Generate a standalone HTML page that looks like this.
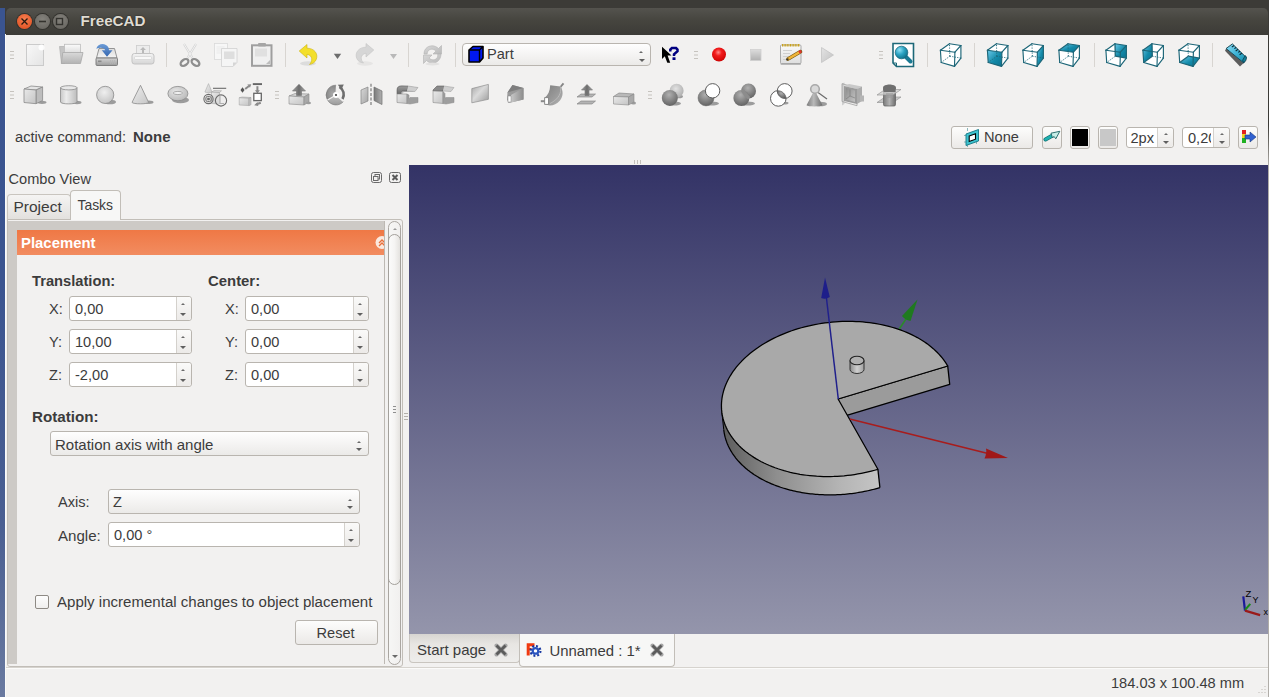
<!DOCTYPE html>
<html><head><meta charset="utf-8">
<style>
*{margin:0;padding:0;box-sizing:border-box}
html,body{width:1269px;height:697px;overflow:hidden;background:#3c3b37;font-family:"Liberation Sans",sans-serif;color:#3c3c3c}
div,svg{position:absolute}
.t{white-space:nowrap;line-height:1}
.wb{top:14px;width:15px;height:15px;border-radius:50%;box-shadow:0 0 0 1px #33322e}
.spin{background:#fff;border:1px solid #b9b5af;border-radius:3px}
.dv{top:0;bottom:0;width:1px;background:#d4d1cc}
.sb{top:0;bottom:0;right:0;background:linear-gradient(#fafaf9,#eceae8);border-radius:0 3px 3px 0}
.combo{border:1px solid #b9b5af;border-radius:3px;background:linear-gradient(#fefefe,#f3f2f1 60%,#ebeae8)}
.btn{border:1px solid #b9b5af;border-radius:3px;background:linear-gradient(#fdfdfc,#ebe9e7)}
.lbl{font-size:14.6px;color:#3c3c3c}
.up,.dn{width:0;height:0;border-left:3px solid transparent;border-right:3px solid transparent}
.up{border-bottom:2.5px solid #6a6a6a;border-left-width:2.5px;border-right-width:2.5px;margin-left:.5px;margin-top:.5px}
.dn{border-top:3px solid #5f5f5f}
</style></head><body>
<div style="left:0;top:8px;width:5px;height:689px;background:linear-gradient(#3a5490,#3b5490 40%,#4a5f92 75%,#6a7aa0)"></div>
<div style="left:5px;top:34px;width:1263px;height:663px;background:#f2f1f0;border-left:1px solid #fafaf9;border-top:1px solid #fbfbfa"></div>
<div style="left:6px;top:8px;width:1262px;height:27px;border-radius:5px 5px 0 0;background:linear-gradient(#54534e,#46453f 45%,#3c3b37)"></div>
<div class="wb" style="left:17px;background:radial-gradient(circle at 50% 35%,#f47e50,#df4a1b)"></div>
<div class="wb" style="left:35px;background:radial-gradient(circle at 50% 35%,#84827c,#62605b)"></div>
<div class="wb" style="left:53px;background:radial-gradient(circle at 50% 35%,#84827c,#62605b)"></div>
<svg style="left:17px;top:14px" width="51" height="15">
 <path d="M4.5 4.5l6 6M10.5 4.5l-6 6" stroke="#2a1a10" stroke-width="1.3"/>
 <path d="M22 7.5h7" stroke="#33322e" stroke-width="1.6"/>
 <rect x="39.5" y="4.5" width="6" height="6" fill="none" stroke="#33322e" stroke-width="1.4"/>
</svg>
<div class="t" style="left:80.5px;top:13px;font-size:15.2px;font-weight:bold;color:#dfdbd2;text-shadow:0 0 1.5px #1a1916">FreeCAD</div>

<!-- workbench combo -->
<div class="combo" style="left:462px;top:43px;width:189px;height:23px;border-radius:4px"></div>
<svg style="left:467px;top:45px" width="19" height="19"><path d="M2,5L6,1.5H16V13L12.5,17H2Z" fill="#0018f0" stroke="#000" stroke-width="1.6" stroke-linejoin="round"/><path d="M2,5H12.5V17M12.5,5L16,1.5" stroke="#000" stroke-width="1.4" fill="none"/></svg>
<div class="t lbl" style="left:487px;top:47px;font-size:14.6px">Part</div>
<div class="up" style="left:638.5px;top:50px"></div><div class="dn" style="left:638.5px;top:59px"></div>

<svg style="left:0;top:0" width="1269" height="120"><defs>
<linearGradient id="gPage" x1="0" y1="0" x2="1" y2="1"><stop offset="0" stop-color="#f8f8f8"/><stop offset="1" stop-color="#e4e4e4"/></linearGradient>
<linearGradient id="gFold" x1="0" y1="0" x2="0" y2="1"><stop offset="0" stop-color="#d9d9d9"/><stop offset="1" stop-color="#b3b3b3"/></linearGradient><linearGradient id="gPaper" x1="0" y1="0" x2="0" y2="1"><stop offset="0" stop-color="#fbfbfb"/><stop offset="1" stop-color="#d9d9d9"/></linearGradient><linearGradient id="gTray" x1="0" y1="0" x2="0" y2="1"><stop offset="0" stop-color="#dcdcdc"/><stop offset="1" stop-color="#f4f4f4"/></linearGradient>
<linearGradient id="gDrive" x1="0" y1="0" x2="0" y2="1"><stop offset="0" stop-color="#d2d2d2"/><stop offset="1" stop-color="#9c9c9c"/></linearGradient>
<linearGradient id="gBlue" x1="0" y1="0" x2="0" y2="1"><stop offset="0" stop-color="#6b9bd6"/><stop offset="1" stop-color="#3466b0"/></linearGradient>
<linearGradient id="gPrint" x1="0" y1="0" x2="0" y2="1"><stop offset="0" stop-color="#f4f4f4"/><stop offset="1" stop-color="#d6d6d6"/></linearGradient>
<linearGradient id="gRef" x1="0" y1="0" x2="1" y2="1"><stop offset="0" stop-color="#d9d9d9"/><stop offset="1" stop-color="#b9b9b9"/></linearGradient>
<radialGradient id="gRed" cx=".45" cy=".35" r=".7"><stop offset="0" stop-color="#ff8a8a"/><stop offset=".35" stop-color="#f21c1c"/><stop offset="1" stop-color="#c80000"/></radialGradient>
<linearGradient id="gStop" x1="0" y1="0" x2="0" y2="1"><stop offset="0" stop-color="#dcdcdc"/><stop offset="1" stop-color="#b0b0b0"/></linearGradient>
<linearGradient id="gNote" x1="0" y1="0" x2="0" y2="1"><stop offset="0" stop-color="#fafafa"/><stop offset="1" stop-color="#dedede"/></linearGradient>
<linearGradient id="gPlay" x1="0" y1="0" x2="1" y2="1"><stop offset="0" stop-color="#e4e4e4"/><stop offset="1" stop-color="#c2c2c2"/></linearGradient>
<linearGradient id="gTeal" x1="0" y1="0" x2="1" y2="1"><stop offset="0" stop-color="#6ccbeb"/><stop offset=".55" stop-color="#138aa9"/><stop offset="1" stop-color="#0b7290"/></linearGradient>
<radialGradient id="gTealR" cx=".35" cy=".3" r=".75"><stop offset="0" stop-color="#8fe0f5"/><stop offset=".5" stop-color="#2aa3c2"/><stop offset="1" stop-color="#0f6f88"/></radialGradient>
<linearGradient id="gRuler" x1="0" y1="0" x2="1" y2="1"><stop offset="0" stop-color="#8ee0f7"/><stop offset=".5" stop-color="#3fb3d6"/><stop offset="1" stop-color="#128aa8"/></linearGradient>
<linearGradient id="gBox" x1="0" y1="0" x2="1" y2="1"><stop offset="0" stop-color="#e9e9e9"/><stop offset="1" stop-color="#c4c4c4"/></linearGradient>
<linearGradient id="gCyl" x1="0" y1="0" x2="1" y2="0"><stop offset="0" stop-color="#c8c8c8"/><stop offset=".35" stop-color="#ececec"/><stop offset="1" stop-color="#bcbcbc"/></linearGradient>
<radialGradient id="gSph" cx=".45" cy=".35" r=".7"><stop offset="0" stop-color="#efefef"/><stop offset="1" stop-color="#c2c2c2"/></radialGradient>
<linearGradient id="gCone" x1="0" y1="0" x2="1" y2="1"><stop offset="0" stop-color="#efefef"/><stop offset="1" stop-color="#c6c6c6"/></linearGradient>
<radialGradient id="gTor" cx=".4" cy=".35" r=".75"><stop offset="0" stop-color="#e6e6e6"/><stop offset="1" stop-color="#b5b5b5"/></radialGradient>
<linearGradient id="gArrow" x1="0" y1="0" x2="1" y2="0"><stop offset="0" stop-color="#a0a0a0"/><stop offset=".5" stop-color="#6c6c6c"/><stop offset="1" stop-color="#a8a8a8"/></linearGradient>
<radialGradient id="gRev" cx=".4" cy=".35" r=".75"><stop offset="0" stop-color="#cfcfcf"/><stop offset="1" stop-color="#8e8e8e"/></radialGradient>
<radialGradient id="gRevA" cx=".6" cy=".6" r=".8"><stop offset="0" stop-color="#a8a8a8"/><stop offset="1" stop-color="#7d7d7d"/></radialGradient><linearGradient id="gRevB" x1="0" y1="0" x2="0" y2="1"><stop offset="0" stop-color="#c4c4c4"/><stop offset="1" stop-color="#9a9a9a"/></linearGradient><linearGradient id="gMirL" x1="0" y1="0" x2="1" y2="1"><stop offset="0" stop-color="#d8d8d8"/><stop offset="1" stop-color="#a5a5a5"/></linearGradient>
<linearGradient id="gMirR" x1="0" y1="0" x2="1" y2="0"><stop offset="0" stop-color="#7a7a7a"/><stop offset="1" stop-color="#b0b0b0"/></linearGradient>
<linearGradient id="gFil" x1="0" y1="0" x2="0" y2="1"><stop offset="0" stop-color="#9b9b9b"/><stop offset="1" stop-color="#6a6a6a"/></linearGradient>
<linearGradient id="gRuled" x1="0" y1="0" x2="1" y2="1"><stop offset="0" stop-color="#a6a6a6"/><stop offset=".45" stop-color="#dadada"/><stop offset="1" stop-color="#9a9a9a"/></linearGradient>
<linearGradient id="gLoft" x1="0" y1="0" x2="1" y2="0"><stop offset="0" stop-color="#c8c8c8"/><stop offset="1" stop-color="#8c8c8c"/></linearGradient>
<linearGradient id="gSwp" x1="0" y1="0" x2="1" y2="1"><stop offset="0" stop-color="#7e7e7e"/><stop offset=".6" stop-color="#9c9c9c"/><stop offset="1" stop-color="#b8b8b8"/></linearGradient>
<radialGradient id="gSphL" cx=".45" cy=".35" r=".7"><stop offset="0" stop-color="#e2e2e2"/><stop offset="1" stop-color="#a9a9a9"/></radialGradient>
<radialGradient id="gSphD" cx=".45" cy=".3" r=".75"><stop offset="0" stop-color="#b0b0b0"/><stop offset="1" stop-color="#5e5e5e"/></radialGradient>
<linearGradient id="gCone2" x1="0" y1="0" x2="1" y2="0"><stop offset="0" stop-color="#7a7a7a"/><stop offset=".45" stop-color="#b9b9b9"/><stop offset="1" stop-color="#6c6c6c"/></linearGradient>
<linearGradient id="gOff" x1="0" y1="0" x2="1" y2="1"><stop offset="0" stop-color="#8e8e8e"/><stop offset="1" stop-color="#c3c3c3"/></linearGradient>
<linearGradient id="gComp" x1="0" y1="0" x2="1" y2="0"><stop offset="0" stop-color="#7b7b7b"/><stop offset=".5" stop-color="#b2b2b2"/><stop offset="1" stop-color="#6e6e6e"/></linearGradient>
<linearGradient id="gPartCube" x1="0" y1="0" x2="1" y2="1"><stop offset="0" stop-color="#2a4cff"/><stop offset="1" stop-color="#0010e0"/></linearGradient>
</defs><path d="M10,51.5h4M10,55h4M10,58.5h4" stroke="#c6c3be" stroke-width="1"/><path d="M10,91.5h4M10,95h4M10,98.5h4" stroke="#c6c3be" stroke-width="1"/><path d="M275,91.5h4M275,95h4M275,98.5h4" stroke="#c6c3be" stroke-width="1"/><path d="M648,91.5h4M648,95h4M648,98.5h4" stroke="#c6c3be" stroke-width="1"/><path d="M694,51.5h4M694,55h4M694,58.5h4" stroke="#c6c3be" stroke-width="1"/><path d="M879,51.5h4M879,55h4M879,58.5h4" stroke="#c6c3be" stroke-width="1"/><path d="M166.5,43v24" stroke="#d8d5d1" stroke-width="1"/><path d="M285.5,43v24" stroke="#d8d5d1" stroke-width="1"/><path d="M408.5,43v24" stroke="#d8d5d1" stroke-width="1"/><path d="M455.5,43v24" stroke="#d8d5d1" stroke-width="1"/><path d="M927.5,43v24" stroke="#d8d5d1" stroke-width="1"/><path d="M974.5,43v24" stroke="#d8d5d1" stroke-width="1"/><path d="M1094.5,43v24" stroke="#d8d5d1" stroke-width="1"/><path d="M1212.5,43v24" stroke="#d8d5d1" stroke-width="1"/><g transform="translate(23,43)"><rect x="3.5" y="1.5" width="17" height="21" fill="url(#gPage)" stroke="#cbcbcb"/><circle cx="18.5" cy="4.5" r="3" fill="#fff" opacity=".9"/></g><g transform="translate(59,43)"><path d="M0.5,3.5H5.5V20.5H2.5Z" fill="#c4c4c4" stroke="#b0b0b0" stroke-width=".7"/><rect x="5.5" y="1.3" width="16" height="10" fill="url(#gPaper)" stroke="#bdbdbd" stroke-width=".8"/><path d="M3.8,9.5H24L21.5,20.5H2.3Z" fill="url(#gFold)" stroke="#a8a8a8" stroke-width=".8"/></g><g transform="translate(95,43)"><path d="M4,5.5H19.5L22,15H1.5Z" fill="url(#gTray)" stroke="#8a8a8a" stroke-width=".9"/><rect x="1" y="15" width="21.5" height="7.5" rx="1" fill="url(#gDrive)" stroke="#777" stroke-width=".9"/><rect x="3" y="17.5" width="3.5" height="1.6" fill="#8a8a8a"/><path d="M15.5,17v4M17.5,17v4M19.5,17v4" stroke="#b4b4b4" stroke-width=".8"/><path d="M1.3,5.8C2.5,0.5 10.5,-1 13.6,4.8L14,7.2H17.5L12,13.8L6.8,7.2H10.3C9.3,4.5 5,3.8 1.3,5.8Z" fill="url(#gBlue)"/></g><g transform="translate(131,43)"><rect x="5.5" y="2.5" width="13" height="10" fill="#ececec" stroke="#cdcdcd" stroke-width=".8"/><path d="M12,4l3,3h-2v3h-2v-3h-2z" fill="#b9b9b9"/><rect x="1" y="10.5" width="22" height="10.5" rx="2.5" fill="url(#gPrint)" stroke="#c3c3c3"/><rect x="3.5" y="13.5" width="17" height="3" rx="1" fill="#f8f8f8" stroke="#cfcfcf" stroke-width=".6"/></g><g transform="translate(178,43)"><path d="M6,1l8.5,14M18,1l-8.5,14" stroke="#d2d2d2" stroke-width="2.2"/><path d="M6,1l8.5,14M18,1l-8.5,14" stroke="#f6f6f6" stroke-width=".9"/><ellipse cx="6.5" cy="19.5" rx="4.3" ry="2.8" transform="rotate(-35 6.5 19.5)" fill="none" stroke="#8e8e8e" stroke-width="2.3"/><ellipse cx="17.5" cy="19.5" rx="4.3" ry="2.8" transform="rotate(35 17.5 19.5)" fill="none" stroke="#8e8e8e" stroke-width="2.3"/></g><g transform="translate(214,43)"><rect x="0.5" y="0.5" width="13" height="16" fill="#f7f7f7" stroke="#dadada" stroke-width=".8"/><path d="M2.5,4h8M2.5,6h8M2.5,8h8M2.5,10h8" stroke="#e2e2e2" stroke-width=".6"/><path d="M7.5,5.5h15.5v14l-4,4h-11.5z" fill="#f5f5f5" stroke="#d0d0d0" stroke-width=".8"/><rect x="10" y="8.5" width="10.5" height="7.5" fill="#dedede"/><path d="M19,23.5l4,-4h-4z" fill="#d5d5d5"/></g><g transform="translate(250,43)"><rect x="2" y="2.3" width="19.5" height="20.5" fill="#f0f0f0" stroke="#9f9f9f" stroke-width="2"/><rect x="8" y="0" width="8" height="3.5" rx="1" fill="#a5a5a5"/><rect x="5" y="5.5" width="12" height="8" fill="#e0e0e0"/><path d="M16,21l4,-4v4z" fill="#bdbdbd"/></g><g transform="translate(296,43)"><ellipse cx="12" cy="20.5" rx="8" ry="2.2" fill="#dcdcdc"/><path d="M3.2,8L11,1.5V5.2C18,5.2 22.5,10.5 20.3,16.3C19.2,19.3 16.5,21 13.5,21.5C16.5,18.5 17.2,12.5 11,11.2V15Z" fill="#f3df2b" stroke="#cdb40c" stroke-width=".6"/></g><path d="M333.8,53.8h7.4l-3.7,5.2z" fill="#6d6d6d"/><g transform="translate(353,43)"><ellipse cx="12" cy="20.5" rx="8" ry="2.2" fill="#e6e5e4"/><path d="M20.8,7L13,0.5V4.2C6,4.2 1.5,9.5 3.7,15.3C4.8,18.3 7.5,19.5 10.5,20C7.5,17 6.8,11.5 13,10.2V14Z" fill="#d6d6d6" stroke="#c4c4c4" stroke-width=".6"/></g><path d="M390,54h7l-3.5,5z" fill="#b9b9b9"/><g transform="translate(420,43)"><path d="M4,11C4,5 9,2 14,3C16,3.5 17.5,4.5 18.5,5.5L21.5,2.5V11H13L16,8C14,6 10.5,5.5 8.5,7.5C7.5,8.5 7.2,10 7.2,11Z" fill="url(#gRef)" stroke="#b3b3b3" stroke-width=".6"/><path d="M21,11C21,17 16,21 11,20C9,19.5 7.5,18.5 6.5,17.5L3.5,20.5V12H12L9,15C11,17 14.5,17.5 16.5,15.5C17.5,14.5 17.8,13 17.8,11Z" fill="url(#gRef)" stroke="#b3b3b3" stroke-width=".6"/><ellipse cx="12.5" cy="21" rx="7" ry="1.5" fill="#e3e2e1"/></g><path d="M662,46.8V59L664.8,56.3L667.3,62.7L670.2,62.7L667.6,55.6H671.5Z" fill="#000"/><path d="M670.3,51.5V49.6L671.9,48.1H676.1L677.5,49.6V51.3L674,54.4V56" fill="none" stroke="#000080" stroke-width="2.5"/><rect x="672.5" y="57.3" width="3" height="2.7" fill="#000080"/><circle cx="719" cy="54.5" r="7" fill="url(#gRed)"/><rect x="750.5" y="49.5" width="10.5" height="11" fill="url(#gStop)" stroke="#d0d0d0" stroke-width=".8"/><g transform="translate(779,43)"><rect x="1.5" y="19" width="20.5" height="3" rx="1" fill="#b9b9b9"/><rect x="1.5" y="2" width="20.5" height="18.5" rx="1" fill="url(#gNote)" stroke="#a3a3a3" stroke-width=".9"/><path d="M3,2.3H21" stroke="#c9a21c" stroke-width="2.6" stroke-dasharray="1,.6"/><path d="M4,7.5h9M4,10.5h7M4,13.5h6M4,16.5h8" stroke="#c8c8c8" stroke-width=".8"/><path d="M9,16L21.5,8.6" stroke="#7a5a10" stroke-width="3.6" stroke-linecap="round"/><path d="M9,16L21.5,8.6" stroke="#f0b53a" stroke-width="2.4"/><path d="M20,9.4L22.3,8.1" stroke="#e23030" stroke-width="2.6"/><path d="M7.3,17l2.2,-1.2" stroke="#333" stroke-width="1.3"/></g><path d="M821.5,47.5L833.5,55L821.5,62.5Z" fill="url(#gPlay)" stroke="#c4c4c4" stroke-width=".8"/><g transform="translate(891.5,43)"><path d="M1.5,0.5h20.5v23h-17l-3.5,-3.5z" fill="#fff" stroke="#1c6878" stroke-width="1.6"/><path d="M1.5,20h3.5v3.5" fill="none" stroke="#1c6878" stroke-width="1"/><path d="M13,12.5l6,6" stroke="#1a7a94" stroke-width="4" stroke-linecap="round"/><circle cx="10" cy="9.5" r="6.3" fill="url(#gTealR)" stroke="#186a80" stroke-width=".8"/></g><g transform="translate(938.5,43)"><polygon points="1.9,7.2 11,0.7 22.4,2.5 22.4,15.1 16,23.4 2.7,19.5" fill="#fff"/><line x1="11.3" y1="13.2" x2="11" y2="0.7" stroke="#1d6678" stroke-width="0.9" stroke-dasharray="1.2,1.3"/><line x1="11.3" y1="13.2" x2="22.4" y2="15.1" stroke="#1d6678" stroke-width="0.9" stroke-dasharray="1.2,1.3"/><line x1="11.3" y1="13.2" x2="2.7" y2="19.5" stroke="#1d6678" stroke-width="0.9" stroke-dasharray="1.2,1.3"/><line x1="1.9" y1="7.2" x2="16.4" y2="9.2" stroke="#1d6678" stroke-width="1.15" stroke-linecap="round"/><line x1="16.4" y1="9.2" x2="16" y2="23.4" stroke="#1d6678" stroke-width="1.15" stroke-linecap="round"/><line x1="16" y1="23.4" x2="2.7" y2="19.5" stroke="#1d6678" stroke-width="1.15" stroke-linecap="round"/><line x1="2.7" y1="19.5" x2="1.9" y2="7.2" stroke="#1d6678" stroke-width="1.15" stroke-linecap="round"/><line x1="1.9" y1="7.2" x2="11" y2="0.7" stroke="#1d6678" stroke-width="1.15" stroke-linecap="round"/><line x1="11" y1="0.7" x2="22.4" y2="2.5" stroke="#1d6678" stroke-width="1.15" stroke-linecap="round"/><line x1="22.4" y1="2.5" x2="16.4" y2="9.2" stroke="#1d6678" stroke-width="1.15" stroke-linecap="round"/><line x1="22.4" y1="2.5" x2="22.4" y2="15.1" stroke="#1d6678" stroke-width="1.15" stroke-linecap="round"/><line x1="22.4" y1="15.1" x2="16" y2="23.4" stroke="#1d6678" stroke-width="1.15" stroke-linecap="round"/></g><g transform="translate(985.5,43)"><polygon points="1.9,7.2 11,0.7 22.4,2.5 22.4,15.1 16,23.4 2.7,19.5" fill="#fff"/><polygon points="1.9,7.2 16.4,9.2 16,23.4 2.7,19.5" fill="url(#gTeal)"/><line x1="11.3" y1="13.2" x2="11" y2="0.7" stroke="#1d6678" stroke-width="0.9" stroke-dasharray="1.2,1.3"/><line x1="11.3" y1="13.2" x2="22.4" y2="15.1" stroke="#1d6678" stroke-width="0.9" stroke-dasharray="1.2,1.3"/><line x1="11.3" y1="13.2" x2="2.7" y2="19.5" stroke="#1d6678" stroke-width="0.9" stroke-dasharray="1.2,1.3"/><line x1="1.9" y1="7.2" x2="16.4" y2="9.2" stroke="#1d6678" stroke-width="1.15" stroke-linecap="round"/><line x1="16.4" y1="9.2" x2="16" y2="23.4" stroke="#1d6678" stroke-width="1.15" stroke-linecap="round"/><line x1="16" y1="23.4" x2="2.7" y2="19.5" stroke="#1d6678" stroke-width="1.15" stroke-linecap="round"/><line x1="2.7" y1="19.5" x2="1.9" y2="7.2" stroke="#1d6678" stroke-width="1.15" stroke-linecap="round"/><line x1="1.9" y1="7.2" x2="11" y2="0.7" stroke="#1d6678" stroke-width="1.15" stroke-linecap="round"/><line x1="11" y1="0.7" x2="22.4" y2="2.5" stroke="#1d6678" stroke-width="1.15" stroke-linecap="round"/><line x1="22.4" y1="2.5" x2="16.4" y2="9.2" stroke="#1d6678" stroke-width="1.15" stroke-linecap="round"/><line x1="22.4" y1="2.5" x2="22.4" y2="15.1" stroke="#1d6678" stroke-width="1.15" stroke-linecap="round"/><line x1="22.4" y1="15.1" x2="16" y2="23.4" stroke="#1d6678" stroke-width="1.15" stroke-linecap="round"/></g><g transform="translate(1021,43)"><polygon points="1.9,7.2 11,0.7 22.4,2.5 22.4,15.1 16,23.4 2.7,19.5" fill="#fff"/><polygon points="16.4,9.2 22.4,2.5 22.4,15.1 16,23.4" fill="url(#gTeal)"/><line x1="11.3" y1="13.2" x2="11" y2="0.7" stroke="#1d6678" stroke-width="0.9" stroke-dasharray="1.2,1.3"/><line x1="11.3" y1="13.2" x2="22.4" y2="15.1" stroke="#1d6678" stroke-width="0.9" stroke-dasharray="1.2,1.3"/><line x1="11.3" y1="13.2" x2="2.7" y2="19.5" stroke="#1d6678" stroke-width="0.9" stroke-dasharray="1.2,1.3"/><line x1="1.9" y1="7.2" x2="16.4" y2="9.2" stroke="#1d6678" stroke-width="1.15" stroke-linecap="round"/><line x1="16.4" y1="9.2" x2="16" y2="23.4" stroke="#1d6678" stroke-width="1.15" stroke-linecap="round"/><line x1="16" y1="23.4" x2="2.7" y2="19.5" stroke="#1d6678" stroke-width="1.15" stroke-linecap="round"/><line x1="2.7" y1="19.5" x2="1.9" y2="7.2" stroke="#1d6678" stroke-width="1.15" stroke-linecap="round"/><line x1="1.9" y1="7.2" x2="11" y2="0.7" stroke="#1d6678" stroke-width="1.15" stroke-linecap="round"/><line x1="11" y1="0.7" x2="22.4" y2="2.5" stroke="#1d6678" stroke-width="1.15" stroke-linecap="round"/><line x1="22.4" y1="2.5" x2="16.4" y2="9.2" stroke="#1d6678" stroke-width="1.15" stroke-linecap="round"/><line x1="22.4" y1="2.5" x2="22.4" y2="15.1" stroke="#1d6678" stroke-width="1.15" stroke-linecap="round"/><line x1="22.4" y1="15.1" x2="16" y2="23.4" stroke="#1d6678" stroke-width="1.15" stroke-linecap="round"/></g><g transform="translate(1057,43)"><polygon points="1.9,7.2 11,0.7 22.4,2.5 22.4,15.1 16,23.4 2.7,19.5" fill="#fff"/><polygon points="1.9,7.2 11,0.7 22.4,2.5 16.4,9.2" fill="url(#gTeal)"/><line x1="11.3" y1="13.2" x2="11" y2="0.7" stroke="#1d6678" stroke-width="0.9" stroke-dasharray="1.2,1.3"/><line x1="11.3" y1="13.2" x2="22.4" y2="15.1" stroke="#1d6678" stroke-width="0.9" stroke-dasharray="1.2,1.3"/><line x1="11.3" y1="13.2" x2="2.7" y2="19.5" stroke="#1d6678" stroke-width="0.9" stroke-dasharray="1.2,1.3"/><line x1="1.9" y1="7.2" x2="16.4" y2="9.2" stroke="#1d6678" stroke-width="1.15" stroke-linecap="round"/><line x1="16.4" y1="9.2" x2="16" y2="23.4" stroke="#1d6678" stroke-width="1.15" stroke-linecap="round"/><line x1="16" y1="23.4" x2="2.7" y2="19.5" stroke="#1d6678" stroke-width="1.15" stroke-linecap="round"/><line x1="2.7" y1="19.5" x2="1.9" y2="7.2" stroke="#1d6678" stroke-width="1.15" stroke-linecap="round"/><line x1="1.9" y1="7.2" x2="11" y2="0.7" stroke="#1d6678" stroke-width="1.15" stroke-linecap="round"/><line x1="11" y1="0.7" x2="22.4" y2="2.5" stroke="#1d6678" stroke-width="1.15" stroke-linecap="round"/><line x1="22.4" y1="2.5" x2="16.4" y2="9.2" stroke="#1d6678" stroke-width="1.15" stroke-linecap="round"/><line x1="22.4" y1="2.5" x2="22.4" y2="15.1" stroke="#1d6678" stroke-width="1.15" stroke-linecap="round"/><line x1="22.4" y1="15.1" x2="16" y2="23.4" stroke="#1d6678" stroke-width="1.15" stroke-linecap="round"/></g><g transform="translate(1104,43)"><polygon points="1.9,7.2 11,0.7 22.4,2.5 22.4,15.1 16,23.4 2.7,19.5" fill="#fff"/><polygon points="11,0.7 22.4,2.5 22.4,15.1 11.3,13.2" fill="url(#gTeal)"/><line x1="11.3" y1="13.2" x2="11" y2="0.7" stroke="#1d6678" stroke-width="1.3"/><line x1="11.3" y1="13.2" x2="22.4" y2="15.1" stroke="#1d6678" stroke-width="1.3"/><line x1="11.3" y1="13.2" x2="2.7" y2="19.5" stroke="#1d6678" stroke-width="0.9" stroke-dasharray="1.2,1.3"/><line x1="1.9" y1="7.2" x2="16.4" y2="9.2" stroke="#1d6678" stroke-width="1.15" stroke-linecap="round"/><line x1="16.4" y1="9.2" x2="16" y2="23.4" stroke="#1d6678" stroke-width="1.15" stroke-linecap="round"/><line x1="16" y1="23.4" x2="2.7" y2="19.5" stroke="#1d6678" stroke-width="1.15" stroke-linecap="round"/><line x1="2.7" y1="19.5" x2="1.9" y2="7.2" stroke="#1d6678" stroke-width="1.15" stroke-linecap="round"/><line x1="1.9" y1="7.2" x2="11" y2="0.7" stroke="#1d6678" stroke-width="1.15" stroke-linecap="round"/><line x1="11" y1="0.7" x2="22.4" y2="2.5" stroke="#1d6678" stroke-width="1.15" stroke-linecap="round"/><line x1="22.4" y1="2.5" x2="16.4" y2="9.2" stroke="#1d6678" stroke-width="1.15" stroke-linecap="round"/><line x1="22.4" y1="2.5" x2="22.4" y2="15.1" stroke="#1d6678" stroke-width="1.15" stroke-linecap="round"/><line x1="22.4" y1="15.1" x2="16" y2="23.4" stroke="#1d6678" stroke-width="1.15" stroke-linecap="round"/></g><g transform="translate(1141,43)"><polygon points="1.9,7.2 11,0.7 22.4,2.5 22.4,15.1 16,23.4 2.7,19.5" fill="#fff"/><polygon points="1.9,7.2 11,0.7 11.3,13.2 2.7,19.5" fill="url(#gTeal)"/><line x1="11.3" y1="13.2" x2="11" y2="0.7" stroke="#1d6678" stroke-width="1.3"/><line x1="11.3" y1="13.2" x2="22.4" y2="15.1" stroke="#1d6678" stroke-width="0.9" stroke-dasharray="1.2,1.3"/><line x1="11.3" y1="13.2" x2="2.7" y2="19.5" stroke="#1d6678" stroke-width="1.3"/><line x1="1.9" y1="7.2" x2="16.4" y2="9.2" stroke="#1d6678" stroke-width="1.15" stroke-linecap="round"/><line x1="16.4" y1="9.2" x2="16" y2="23.4" stroke="#1d6678" stroke-width="1.15" stroke-linecap="round"/><line x1="16" y1="23.4" x2="2.7" y2="19.5" stroke="#1d6678" stroke-width="1.15" stroke-linecap="round"/><line x1="2.7" y1="19.5" x2="1.9" y2="7.2" stroke="#1d6678" stroke-width="1.15" stroke-linecap="round"/><line x1="1.9" y1="7.2" x2="11" y2="0.7" stroke="#1d6678" stroke-width="1.15" stroke-linecap="round"/><line x1="11" y1="0.7" x2="22.4" y2="2.5" stroke="#1d6678" stroke-width="1.15" stroke-linecap="round"/><line x1="22.4" y1="2.5" x2="16.4" y2="9.2" stroke="#1d6678" stroke-width="1.15" stroke-linecap="round"/><line x1="22.4" y1="2.5" x2="22.4" y2="15.1" stroke="#1d6678" stroke-width="1.15" stroke-linecap="round"/><line x1="22.4" y1="15.1" x2="16" y2="23.4" stroke="#1d6678" stroke-width="1.15" stroke-linecap="round"/></g><g transform="translate(1177,43)"><polygon points="1.9,7.2 11,0.7 22.4,2.5 22.4,15.1 16,23.4 2.7,19.5" fill="#fff"/><polygon points="2.7,19.5 16,23.4 22.4,15.1 11.3,13.2" fill="url(#gTeal)"/><line x1="11.3" y1="13.2" x2="11" y2="0.7" stroke="#1d6678" stroke-width="0.9" stroke-dasharray="1.2,1.3"/><line x1="11.3" y1="13.2" x2="22.4" y2="15.1" stroke="#1d6678" stroke-width="1.3"/><line x1="11.3" y1="13.2" x2="2.7" y2="19.5" stroke="#1d6678" stroke-width="1.3"/><line x1="1.9" y1="7.2" x2="16.4" y2="9.2" stroke="#1d6678" stroke-width="1.15" stroke-linecap="round"/><line x1="16.4" y1="9.2" x2="16" y2="23.4" stroke="#1d6678" stroke-width="1.15" stroke-linecap="round"/><line x1="16" y1="23.4" x2="2.7" y2="19.5" stroke="#1d6678" stroke-width="1.15" stroke-linecap="round"/><line x1="2.7" y1="19.5" x2="1.9" y2="7.2" stroke="#1d6678" stroke-width="1.15" stroke-linecap="round"/><line x1="1.9" y1="7.2" x2="11" y2="0.7" stroke="#1d6678" stroke-width="1.15" stroke-linecap="round"/><line x1="11" y1="0.7" x2="22.4" y2="2.5" stroke="#1d6678" stroke-width="1.15" stroke-linecap="round"/><line x1="22.4" y1="2.5" x2="16.4" y2="9.2" stroke="#1d6678" stroke-width="1.15" stroke-linecap="round"/><line x1="22.4" y1="2.5" x2="22.4" y2="15.1" stroke="#1d6678" stroke-width="1.15" stroke-linecap="round"/><line x1="22.4" y1="15.1" x2="16" y2="23.4" stroke="#1d6678" stroke-width="1.15" stroke-linecap="round"/></g><g transform="translate(1224,43)"><polygon points="1,7.8 2.1,5.5 19.7,19.9 16,23.5" fill="#4d4d4d" opacity=".9"/><polygon points="2.1,5.5 8.4,0.9 22.3,14.5 19.7,19.9" fill="url(#gRuler)" stroke="#0d3c4a" stroke-width=".9" stroke-linejoin="round"/><path d="M10.07,2.53L7.81,4.18M12.01,4.44L10.40,5.62M13.96,6.34L11.70,7.99M15.91,8.24L14.29,9.42M17.85,10.15L15.59,11.80" stroke="#0a2530" stroke-width="1.1"/><path d="M18.6,17.2L21.2,12.6C23,13.5 23,17.5 19.7,19.9Z" fill="#127f98" stroke="#0a3040" stroke-width=".7"/></g><g transform="translate(23,83)"><ellipse cx="19" cy="19.3" rx="4.5" ry="1.6" fill="#9c9c9c"/><polygon points="1,6 8,3 19.6,4 13,7" fill="#e4e4e4" stroke="#8a8a8a" stroke-width=".8"/><polygon points="13,7 19.6,4 19.6,17.5 13,20.7" fill="#bdbdbd" stroke="#8a8a8a" stroke-width=".8"/><polygon points="1,6 13,7 13,20.7 1,19.5" fill="url(#gBox)" stroke="#8a8a8a" stroke-width=".8"/></g><g transform="translate(58,83)"><ellipse cx="19" cy="19.5" rx="4.5" ry="1.7" fill="#9c9c9c"/><path d="M2.5,4.8V19C2.5,21.5 19,21.5 19,19V4.8Z" fill="url(#gCyl)" stroke="#8a8a8a" stroke-width=".8"/><ellipse cx="10.8" cy="4.8" rx="8.3" ry="2.1" fill="#e8e8e8" stroke="#8a8a8a" stroke-width=".8"/></g><g transform="translate(94,83)"><ellipse cx="16" cy="19" rx="6" ry="2.3" fill="#9c9c9c"/><circle cx="11.2" cy="11.9" r="8.6" fill="url(#gSph)" stroke="#8a8a8a" stroke-width=".8"/></g><g transform="translate(130,83)"><ellipse cx="19" cy="19.3" rx="4.5" ry="1.7" fill="#9c9c9c"/><path d="M10.5,2.3L2,19.4C3,21.3 17.5,21.3 18.6,19.4Z" fill="url(#gCone)" stroke="#8a8a8a" stroke-width=".8" stroke-linejoin="round"/></g><g transform="translate(167,83)"><ellipse cx="13.5" cy="17" rx="8.5" ry="3.2" fill="#9c9c9c"/><ellipse cx="10.9" cy="10.6" rx="10" ry="7.2" fill="url(#gTor)" stroke="#8a8a8a" stroke-width=".8"/><ellipse cx="10.9" cy="10" rx="4.6" ry="1.6" fill="#f0f0f0" stroke="#999" stroke-width=".8"/></g><g transform="translate(203,83)"><path d="M10,5.3H23.2" stroke="#6a6a6a" stroke-width="1.1"/><polygon points="8.5,9.2 11,7.5 18.5,7.8 16.5,9.5" fill="#d8d8d8" stroke="#9a9a9a" stroke-width=".5"/><polygon points="8.5,9.2 16.5,9.5 16.5,21 8.5,20.5" fill="url(#gBox)" stroke="#9a9a9a" stroke-width=".5"/><path d="M5.5,0.6L1.9,9C2.5,10 8.5,10 9,9Z" fill="url(#gCone)" stroke="#a0a0a0" stroke-width=".5"/><circle cx="5.5" cy="16" r="4.6" fill="none" stroke="#6a6a6a" stroke-width="1.1"/><rect x="2.9" y="13.4" width="5.2" height="5.2" rx="1.6" fill="none" stroke="#6a6a6a" stroke-width="1"/><rect x="4.6" y="15.1" width="1.8" height="1.8" fill="none" stroke="#6a6a6a" stroke-width=".8"/><circle cx="18" cy="17.5" r="5.6" fill="#e9e9e9" fill-opacity=".5" stroke="#6a6a6a" stroke-width="1.1"/><path d="M17,12.5V20.5H21" stroke="#b0b0b0" stroke-width="1.1" fill="none"/></g><g transform="translate(238,83)"><path d="M3.2,7L4.5,5.2L5.8,7L4.5,8.8Z" fill="#555" stroke="#555" stroke-width="1.2"/><path d="M7.2,6L11,3" stroke="#8a8a8a" stroke-width="2"/><path d="M9.3,1.5L13.3,1.2L12,4.8Z" fill="#8a8a8a"/><path d="M14.8,1.1H24" stroke="#666" stroke-width="1.9"/><path d="M19.4,3.2V8" stroke="#8a8a8a" stroke-width="2"/><path d="M16.9,7.3H21.9L19.4,10.6Z" fill="#8a8a8a"/><rect x="15.8" y="10.3" width="7.5" height="7.3" fill="#fff" stroke="#666" stroke-width="1.3"/><path d="M22.8,19.8L18.5,21.3" stroke="#8a8a8a" stroke-width="2"/><path d="M19.5,19L16.2,22.2L20.3,23Z" fill="#8a8a8a"/><polygon points="1.2,14.8 4,14 13,14.5 11,15.3" fill="#dedede" stroke="#9a9a9a" stroke-width=".5"/><polygon points="1.2,14.8 11,15.3 11,22.6 1.2,22" fill="url(#gBox)" stroke="#9a9a9a" stroke-width=".5"/><polygon points="11,15.3 13,14.5 13,21.8 11,22.6" fill="#c2c2c2" stroke="#9a9a9a" stroke-width=".5"/></g><g transform="translate(287,83)"><polygon points="2,13 8,10.5 22,11 17,14" fill="#d4d4d4" stroke="#8a8a8a" stroke-width=".6"/><polygon points="2,13 17,14 17,22 2,21" fill="url(#gBox)" stroke="#8a8a8a" stroke-width=".6"/><polygon points="17,14 22,11 22,19 17,22" fill="#a8a8a8" stroke="#8a8a8a" stroke-width=".6"/><ellipse cx="21.5" cy="20" rx="2.5" ry="1.3" fill="#9c9c9c"/><path d="M12,1.3L5.5,8h4v4.5h5V8h4z" fill="url(#gArrow)" stroke="#6f6f6f" stroke-width=".6"/></g><g transform="translate(324,83)"><path d="M12,12L12.5,2.2A9.8,9.8 0 0 0 3.5,17Z" fill="url(#gRevA)"/><path d="M12,12L3.5,17A9.8,9.8 0 0 0 19.5,18.5Z" fill="url(#gRevB)"/><path d="M12,2.2A9.8,9.8 0 0 0 3.5,17A9.8,9.8 0 0 0 19.5,18.5" fill="none" stroke="#777" stroke-width=".6"/><path d="M12,12L3.5,17M12,12L12.5,2.2M12,12L19.5,18.5" stroke="#f2f1f0" stroke-width="1.2"/><path d="M15.5,3.8A9,9 0 0 1 18.5,16" stroke="#6e6e6e" stroke-width="2.6" fill="none"/><path d="M13.8,1.8L19.8,1.5L17.5,6.5Z" fill="#6e6e6e"/><circle cx="12" cy="12" r="3" fill="#fff"/><circle cx="12" cy="12" r="1.1" fill="#444"/></g><g transform="translate(360,83)"><polygon points="1,7 8,4 8,18 1,21" fill="url(#gMirL)" stroke="#858585" stroke-width=".7"/><polygon points="14,4 22,8 22,21.5 14,17.5" fill="url(#gMirR)" stroke="#6e6e6e" stroke-width=".7"/><path d="M11,0.7v22.5" stroke="#9a9a9a" stroke-width="1.6" stroke-dasharray="3,1.6"/></g><g transform="translate(396,83)"><path d="M1,7C1,3 3,2.5 6,2.5L22,4.5L17,9H9C7,9 6.5,10 6.5,11V13" fill="#bdbdbd"/><path d="M1,7C1,4 3,3 6,3H12L11,8H7C5.5,8 5,9 5,10V11H1Z" fill="url(#gFil)" stroke="#5f5f5f" stroke-width=".6"/><path d="M12,3L22,4.5L19,8.5L11,8" fill="#cfcfcf" stroke="#999" stroke-width=".5"/><path d="M1,11H11V20.5L1,19.5Z" fill="url(#gBox)" stroke="#8a8a8a" stroke-width=".6"/><path d="M11,11L13,12V15.5L14,14.5H22V19.5L14,21L11,20.5Z" fill="#9e9e9e" stroke="#8a8a8a" stroke-width=".5"/></g><g transform="translate(432,83)"><path d="M1,7L5,3H12L11,8H1Z" fill="#8a8a8a" stroke="#5f5f5f" stroke-width=".6"/><path d="M12,3L22,4.5L19,8.5L11,8" fill="#cfcfcf" stroke="#999" stroke-width=".5"/><path d="M1,8L11,8.5V20.5L1,19.5Z" fill="url(#gBox)" stroke="#8a8a8a" stroke-width=".6"/><path d="M11,8.5L13,10.5V15L14,14.5H22V19.5L14,21L11,20.5Z" fill="#9e9e9e" stroke="#8a8a8a" stroke-width=".5"/></g><polygon points="471.8,88.6 488.4,84.4 488.4,99.3 471.8,102.8" fill="url(#gRuled)" stroke="#8e8e8e" stroke-width=".7"/><g transform="translate(504,83)"><path d="M3.5,9.5L8.5,2L19.5,5V16.5L4.5,20L3,16.5Z" fill="#9a9a9a"/><path d="M8.5,2L19.5,5L3.5,9.5Z" fill="#7e7e7e"/><path d="M19.5,5V16.5L7,19.5L7,12Z" fill="url(#gLoft)"/><rect x="4" y="13" width="3" height="6" fill="#fff" stroke="#888" stroke-width=".5"/></g><g transform="translate(540,83)"><path d="M20.5,4L23.5,0.3" stroke="#858585" stroke-width="1.9"/><path d="M10.2,2.2L20.7,3.6C23.2,8 23.5,13 20,17.5C17,21 13,22.8 9.6,22.6L4.7,21.3V14.7C8,12 10,8 10.2,2.2Z" fill="url(#gSwp)"/><path d="M20.7,3.6C21.5,10 19,16 10,20.5" stroke="#b9b9b9" stroke-width="1" fill="none"/><rect x="4.7" y="14.7" width="3.8" height="6.6" fill="#fff" stroke="#7a7a7a" stroke-width=".8"/><path d="M0.8,18.2H4.8" stroke="#8a8a8a" stroke-width="2"/></g><g transform="translate(575,83)"><polygon points="2,14 6,11 20.5,11 17,14" fill="#b4b4b4" stroke="#7c7c7c" stroke-width=".6"/><polygon points="2,21 6,18 20.5,18 17,21" fill="#b4b4b4" stroke="#7c7c7c" stroke-width=".6"/><path d="M12,1.5L6.5,7H10V12.5H14V7H17.5Z" fill="url(#gArrow)" stroke="#707070" stroke-width=".6"/></g><g transform="translate(612,83)"><ellipse cx="21.5" cy="20" rx="2.5" ry="1.5" fill="#9c9c9c"/><polygon points="1.5,13.5 7,10 22,11 16.5,14" fill="#b9b9b9" stroke="#7d7d7d" stroke-width=".6"/><polygon points="1.5,13.5 16.5,14 16.5,22 1.5,21" fill="url(#gBox)" stroke="#8a8a8a" stroke-width=".6"/><polygon points="16.5,14 22,11 22,19 16.5,22" fill="#a9a9a9" stroke="#8a8a8a" stroke-width=".6"/></g><g transform="translate(661,83)"><ellipse cx="18" cy="13.5" rx="4" ry="1.8" fill="#9c9c9c"/><circle cx="15.6" cy="7.8" r="7" fill="url(#gSphL)"/><ellipse cx="13" cy="20.5" rx="7" ry="2" fill="#9c9c9c"/><circle cx="8.8" cy="14.9" r="8" fill="url(#gSphD)"/></g><g transform="translate(697,83)"><ellipse cx="14" cy="20.5" rx="8" ry="2" fill="#9c9c9c"/><circle cx="9" cy="14.9" r="8" fill="url(#gSphD)" stroke="#6d6d6d" stroke-width=".5"/><circle cx="15.6" cy="7.8" r="7.2" fill="#fff" stroke="#5c5c5c" stroke-width="1"/></g><g transform="translate(733,83)"><ellipse cx="14" cy="20.5" rx="8" ry="2" fill="#9c9c9c"/><circle cx="15.5" cy="8" r="7.5" fill="url(#gSphD)"/><circle cx="8.4" cy="15" r="8" fill="url(#gSphD)"/><path d="M8,7.5L15,15L12,17L6,9Z" fill="#8a8a8a" opacity=".0"/><path d="M9.5,7.3C11,10 13,12.5 16.2,15.3" stroke="#8c8c8c" stroke-width="3.5" fill="none"/></g><g transform="translate(769,83)"><ellipse cx="14.5" cy="20" rx="5" ry="1.5" fill="#9c9c9c"/><circle cx="9.3" cy="15.4" r="7.8" fill="#fff" stroke="#5e5e5e" stroke-width="1"/><circle cx="15.7" cy="8" r="7.4" fill="#fff" stroke="#5e5e5e" stroke-width="1"/><path d="M8.6,7.8C13,7.5 17,11.5 16.9,15.2C12.5,15.5 8.5,11.5 8.6,7.8Z" fill="url(#gSphD)" stroke="#5e5e5e" stroke-width=".8"/></g><g transform="translate(805,83)"><ellipse cx="15" cy="21" rx="7" ry="2.3" fill="#9c9c9c"/><path d="M8.5,9L1.5,22.2C3,23.8 15.5,23.8 17.5,22.2L10.5,9Z" fill="url(#gCone2)"/><path d="M13,9.5l9,6.5" stroke="#6a6a6a" stroke-width="1.2"/><circle cx="10" cy="6" r="4.3" fill="#d9d9d9" stroke="#a9a9a9" stroke-width="1.6"/></g><g transform="translate(841,83)"><polygon points="1,0.5 3.5,-0.5 3.5,21 1,22.5" fill="#cfcfcf"/><path d="M1,0.7L16,5V22.7L1,18.5Z" fill="none" stroke="#a0a0a0" stroke-width=".8"/><polygon points="3,3 8,1 21,3.5 16,6" fill="#c9c9c9"/><polygon points="16,6 21,3.5 21,18 16,21" fill="#acacac"/><rect x="19" y="12.5" width="4" height="6" fill="#b5b5b5"/><polygon points="3,3 16,6 16,21 3,18" fill="#9b9b9b"/><polygon points="5,5 14,7.5 14,19 5,16.5" fill="url(#gOff)"/><path d="M9,6.5v6.5l-4,3M9,13l5,2" stroke="#777" stroke-width=".6" fill="none"/></g><g transform="translate(877,83)"><polygon points="0,19.5 8,14 24,14 16,19.5" fill="#c8c8c8" stroke="#8d8d8d" stroke-width=".6"/><rect x="6.5" y="3" width="12" height="20" rx="1.5" fill="url(#gComp)" stroke="#5e5e5e" stroke-width=".7"/><polygon points="0,12 8,6.5 24,6.5 16,12" fill="#d0d0d0" fill-opacity=".75" stroke="#8d8d8d" stroke-width=".6"/><path d="M6.5,4.5C6.5,0.5 18.5,0.5 18.5,4.5V9H6.5Z" fill="#6f6f6f"/><rect x="9" y="10" width="7" height="5" fill="#9a9a9a" opacity=".6"/></g></svg>

<!-- active command row -->
<div class="t lbl" style="left:15px;top:130px;font-size:14.7px">active command:</div>
<div class="t lbl" style="left:133px;top:129px;font-size:15px;font-weight:bold">None</div>

<div class="btn" style="left:951px;top:126px;width:82px;height:23px"></div>
<svg style="left:963px;top:127px" width="18" height="20"><path d="M1,8.5h3M13,4h3M1,15h3M13,11.5h3M4.5,1v3M4.5,17v3M13.5,14v3" stroke="#5a9aa0" stroke-width=".7"/><path d="M3,7L15.5,2.5V14L3,18.5Z" fill="#3ec3cf" stroke="#137684" stroke-width=".9"/><path d="M6.2,9L12.5,6.7V12.2L6.2,14.5Z" fill="#fff" stroke="#000" stroke-width="1.1"/></svg>
<div class="t lbl" style="left:984px;top:130px;font-size:14.6px">None</div>
<div class="btn" style="left:1042px;top:126px;width:20px;height:23px"></div>
<svg style="left:1043px;top:128px" width="18" height="18"><path d="M2.5,11.5L9.5,7.5" stroke="#0f6a6a" stroke-width="4" stroke-linecap="round"/><path d="M2.5,11.5L9.5,7.5" stroke="#20b0b0" stroke-width="2.6" stroke-linecap="round"/><path d="M8,5.2L16.8,3.3L12.8,10.8L11.2,8.6L9.4,9.6Z" fill="#c9eee8" stroke="#1a6262" stroke-width=".9" stroke-linejoin="round"/></svg>
<div class="btn" style="left:1070px;top:126px;width:20px;height:23px"></div>
<div style="left:1072px;top:128.5px;width:16px;height:17px;background:#000"></div>
<div class="btn" style="left:1098px;top:126px;width:20px;height:23px"></div>
<div style="left:1100px;top:128.5px;width:16px;height:17px;background:#c8c8c8"></div>
<div class="spin" style="left:1126px;top:127px;width:48px;height:21px"><div class="dv" style="left:30px"></div><div class="sb" style="left:31px"></div></div>
<div class="t lbl" style="left:1130.5px;top:131px;font-size:14.6px">2px</div>
<div class="up" style="left:1163px;top:132px"></div><div class="dn" style="left:1163px;top:141px"></div>
<div class="spin" style="left:1182px;top:127px;width:48px;height:21px;overflow:hidden"><div style="left:0;top:0;width:28px;height:19px;overflow:hidden"><div class="t lbl" style="left:5px;top:3px;font-size:14.6px">0,20</div></div><div class="dv" style="left:30px"></div><div class="sb" style="left:31px"></div></div>
<div class="up" style="left:1219px;top:132px"></div><div class="dn" style="left:1219px;top:141px"></div>
<div class="btn" style="left:1238px;top:126px;width:20px;height:23px"></div>
<svg style="left:1239px;top:128px" width="18" height="18"><rect x="3" y="2" width="4" height="4" fill="#e02020"/><rect x="3" y="6" width="4" height="4" fill="#f0d020"/><rect x="3" y="10" width="4" height="5" fill="#20b020"/><path d="M6,7h5v-3l6,5l-6,5v-3h-5z" fill="#3060d0" stroke="#1a3a80" stroke-width=".6"/></svg>

<!-- combo view header -->
<div class="t lbl" style="left:8.5px;top:171.5px;font-size:14.6px">Combo View</div>
<svg style="left:371px;top:172px" width="30" height="11">
 <rect x="0.5" y="0.5" width="10" height="10" rx="2" fill="none" stroke="#6a6a6a"/>
 <rect x="4" y="2.5" width="4.5" height="4.5" fill="none" stroke="#6a6a6a"/><rect x="2.5" y="4.5" width="4.5" height="4" fill="#f2f1f0" stroke="#6a6a6a"/>
 <rect x="18.5" y="0.5" width="11" height="10" rx="2" fill="none" stroke="#6a6a6a"/>
 <path d="M21.5,3l5,5M26.5,3l-5,5" stroke="#5a5a5a" stroke-width="2"/>
</svg>

<!-- tabs -->
<div style="left:7px;top:194px;width:64px;height:26px;border:1px solid #c9c5bf;border-bottom:none;border-radius:4px 4px 0 0;background:linear-gradient(#f5f4f3,#e2e0dd)"></div>
<div class="t lbl" style="left:13.5px;top:198.5px;font-size:15.5px">Project</div>
<div style="left:70px;top:190px;width:51px;height:31px;border:1px solid #c2beb8;border-bottom:none;border-radius:4px 4px 0 0;background:#f7f7f6"></div>
<div class="t lbl" style="left:77.5px;top:199px;font-size:13.9px">Tasks</div>

<!-- pane -->
<div style="left:7px;top:219px;width:396px;height:448px;border:1px solid #c2beb8;border-radius:0 3px 3px 3px;background:#f2f1f0"></div>
<div style="left:71px;top:218px;width:49px;height:2px;background:#f7f7f6"></div>
<div style="left:8px;top:221px;width:377px;height:443px;background:#cdcac6"></div>
<div style="left:17px;top:230px;width:368px;height:434px;background:#f2f1f0"></div>
<div style="left:17px;top:230px;width:368px;height:25px;background:linear-gradient(#ef7845,#f28c60)"></div>
<div class="t" style="left:21px;top:236px;font-size:14.9px;font-weight:bold;color:#fff">Placement</div>
<svg style="left:374px;top:234px" width="11" height="17"><circle cx="8" cy="8.5" r="6.5" fill="#fbe9df"/><path d="M5,9l3,-3l3,3M5,12l3,-3l3,3" stroke="#e8703c" stroke-width="1.3" fill="none"/></svg>

<!-- scrollbar -->
<div style="left:384px;top:221px;width:1px;height:443px;background:#bdb9b3"></div>
<div style="left:388px;top:221px;width:13px;height:444px;border:1px solid #aaa6a1;border-radius:6.5px;background:linear-gradient(90deg,#f6f6f5,#f1f0ef)"></div>
<div style="left:388px;top:234px;width:13px;height:351px;border:1px solid #a3a09b;border-radius:6.5px;background:linear-gradient(90deg,#fbfbfb,#f5f4f3 50%,#e4e2df)"></div>
<div class="up" style="left:392px;top:227px;border-left-width:2.5px;border-right-width:2.5px;border-bottom:2.5px solid #9a9a9a"></div>
<div class="dn" style="left:391.5px;top:655px;border-top-color:#6a6a6a"></div>
<svg style="left:393px;top:405px" width="16" height="16"><path d="M0,1.5h3M0,4.5h3M0,7.5h3" stroke="#8f8f8f"/><path d="M11,8.5h4M11,11.5h4M11,14.5h4" stroke="#b3b0ab"/></svg>
<!-- Translation/Center -->
<div class="t lbl" style="left:32px;top:273.5px;font-size:14.7px;font-weight:bold">Translation:</div>
<div class="t lbl" style="left:208px;top:273.5px;font-size:14.9px;font-weight:bold">Center:</div>

<div class="t lbl" style="left:49px;top:302px">X:</div>
<div class="spin" style="left:69px;top:296px;width:123px;height:25px"><div class="dv" style="left:106px"></div><div class="sb" style="left:107px"></div></div>
<div class="t lbl" style="left:75px;top:302px">0,00</div>
<div class="up" style="left:180px;top:302px"></div><div class="dn" style="left:180px;top:313px"></div>

<div class="t lbl" style="left:49px;top:335px">Y:</div>
<div class="spin" style="left:69px;top:329px;width:123px;height:25px"><div class="dv" style="left:106px"></div><div class="sb" style="left:107px"></div></div>
<div class="t lbl" style="left:75px;top:335px">10,00</div>
<div class="up" style="left:180px;top:335px"></div><div class="dn" style="left:180px;top:346px"></div>

<div class="t lbl" style="left:49px;top:368px">Z:</div>
<div class="spin" style="left:69px;top:362px;width:123px;height:25px"><div class="dv" style="left:106px"></div><div class="sb" style="left:107px"></div></div>
<div class="t lbl" style="left:75px;top:368px">-2,00</div>
<div class="up" style="left:180px;top:368px"></div><div class="dn" style="left:180px;top:379px"></div>

<div class="t lbl" style="left:225px;top:302px">X:</div>
<div class="spin" style="left:245px;top:296px;width:124px;height:25px"><div class="dv" style="left:107px"></div><div class="sb" style="left:108px"></div></div>
<div class="t lbl" style="left:251px;top:302px">0,00</div>
<div class="up" style="left:357px;top:302px"></div><div class="dn" style="left:357px;top:313px"></div>

<div class="t lbl" style="left:225px;top:335px">Y:</div>
<div class="spin" style="left:245px;top:329px;width:124px;height:25px"><div class="dv" style="left:107px"></div><div class="sb" style="left:108px"></div></div>
<div class="t lbl" style="left:251px;top:335px">0,00</div>
<div class="up" style="left:357px;top:335px"></div><div class="dn" style="left:357px;top:346px"></div>

<div class="t lbl" style="left:225px;top:368px">Z:</div>
<div class="spin" style="left:245px;top:362px;width:124px;height:25px"><div class="dv" style="left:107px"></div><div class="sb" style="left:108px"></div></div>
<div class="t lbl" style="left:251px;top:368px">0,00</div>
<div class="up" style="left:357px;top:368px"></div><div class="dn" style="left:357px;top:379px"></div>

<!-- Rotation -->
<div class="t lbl" style="left:32px;top:408.5px;font-size:15.2px;font-weight:bold">Rotation:</div>
<div class="combo" style="left:50px;top:431px;width:319px;height:25px"></div>
<div class="t lbl" style="left:55px;top:437px;font-size:15px">Rotation axis with angle</div>
<div class="up" style="left:356px;top:440px"></div><div class="dn" style="left:356px;top:448px"></div>

<div class="t lbl" style="left:58px;top:495px">Axis:</div>
<div class="combo" style="left:108px;top:489px;width:252px;height:25px"></div>
<div class="t lbl" style="left:113px;top:495px">Z</div>
<div class="up" style="left:347px;top:498px"></div><div class="dn" style="left:347px;top:506px"></div>

<div class="t lbl" style="left:58px;top:528px;font-size:15.1px">Angle:</div>
<div class="spin" style="left:108px;top:522px;width:252px;height:25px"><div class="dv" style="left:235px"></div><div class="sb" style="left:236px"></div></div>
<div class="t lbl" style="left:114px;top:528px">0,00 °</div>
<div class="up" style="left:348px;top:528px"></div><div class="dn" style="left:348px;top:539px"></div>

<div style="left:35px;top:595px;width:14px;height:14px;border:1px solid #8e8a84;border-radius:2px;background:linear-gradient(#fdfdfd,#f0efee)"></div>
<div class="t lbl" style="left:57px;top:594px;font-size:15.05px">Apply incremental changes to object placement</div>
<div class="btn" style="left:295px;top:620px;width:83px;height:25px"></div>
<div class="t lbl" style="left:316.5px;top:626px">Reset</div>

<!-- 3D view -->
<div id="view" style="left:409px;top:165px;width:859px;height:469px;background:linear-gradient(#333366,#9495ab)"></div>
<svg style="left:409px;top:165px" width="859" height="469" id="scene"><defs>
<linearGradient id="gBand" gradientUnits="userSpaceOnUse" x1="312.7" y1="0" x2="468.9" y2="0"><stop offset="0" stop-color="#5c5c5c"/><stop offset=".35" stop-color="#8e8e8e"/><stop offset=".75" stop-color="#b4b4b4"/><stop offset="1" stop-color="#c4c4c4"/></linearGradient>
<linearGradient id="gCylS" x1="0" y1="0" x2="1" y2="0"><stop offset="0" stop-color="#8a8a8a"/><stop offset=".5" stop-color="#d0d0d0"/><stop offset="1" stop-color="#a0a0a0"/></linearGradient>
</defs><path d="M312.75,246.42 L312.89,247.61 L313.07,248.79 L313.27,249.97 L313.50,251.15 L313.75,252.32 L314.04,253.49 L314.35,254.65 L314.69,255.81 L315.06,256.96 L315.45,258.11 L315.87,259.25 L316.32,260.38 L316.80,261.51 L317.30,262.63 L317.83,263.75 L318.39,264.86 L318.98,265.96 L319.59,267.05 L320.22,268.14 L320.89,269.21 L321.57,270.28 L322.29,271.34 L323.03,272.39 L323.80,273.43 L324.59,274.47 L325.41,275.49 L326.25,276.50 L327.11,277.50 L328.00,278.49 L328.92,279.47 L329.86,280.44 L330.82,281.40 L331.81,282.35 L332.82,283.29 L333.85,284.21 L334.91,285.12 L335.99,286.02 L337.09,286.91 L338.22,287.78 L339.36,288.64 L340.53,289.49 L341.72,290.32 L342.93,291.15 L344.16,291.95 L345.41,292.75 L346.68,293.53 L347.97,294.29 L349.28,295.04 L350.61,295.78 L351.96,296.50 L353.33,297.20 L354.71,297.89 L356.11,298.57 L357.54,299.23 L358.97,299.87 L360.43,300.50 L361.90,301.11 L363.39,301.71 L364.89,302.29 L366.41,302.85 L367.94,303.40 L369.49,303.93 L371.06,304.44 L372.63,304.93 L374.22,305.41 L375.83,305.88 L377.44,306.32 L379.07,306.75 L380.71,307.16 L382.37,307.55 L384.03,307.92 L385.71,308.28 L387.39,308.62 L389.09,308.94 L390.79,309.24 L392.51,309.52 L394.23,309.79 L395.96,310.04 L397.70,310.27 L399.45,310.48 L401.20,310.67 L402.96,310.85 L404.73,311.00 L406.50,311.14 L408.28,311.26 L410.07,311.36 L411.85,311.44 L413.65,311.50 L415.44,311.55 L417.24,311.57 L419.04,311.58 L420.85,311.57 L422.65,311.54 L424.46,311.49 L426.27,311.42 L428.08,311.33 L429.89,311.23 L431.70,311.10 L433.51,310.96 L435.32,310.80 L437.13,310.62 L438.93,310.42 L440.73,310.21 L442.53,309.97 L444.33,309.72 L446.12,309.45 L447.91,309.16 L449.70,308.85 L451.47,308.53 L453.25,308.18 L455.02,307.82 L456.78,307.44 L458.53,307.05 L460.28,306.63 L462.02,306.20 L463.75,305.75 L465.48,305.29 L467.19,304.80 L468.90,304.30 L470.90,322.60 L469.19,323.10 L467.48,323.59 L465.75,324.05 L464.02,324.50 L462.28,324.93 L460.53,325.35 L458.78,325.74 L457.02,326.12 L455.25,326.48 L453.47,326.83 L451.70,327.15 L449.91,327.46 L448.12,327.75 L446.33,328.02 L444.53,328.27 L442.73,328.51 L440.93,328.72 L439.13,328.92 L437.32,329.10 L435.51,329.26 L433.70,329.40 L431.89,329.53 L430.08,329.63 L428.27,329.72 L426.46,329.79 L424.65,329.84 L422.85,329.87 L421.04,329.88 L419.24,329.87 L417.44,329.85 L415.65,329.80 L413.85,329.74 L412.07,329.66 L410.28,329.56 L408.50,329.44 L406.73,329.30 L404.96,329.15 L403.20,328.97 L401.45,328.78 L399.70,328.57 L397.96,328.34 L396.23,328.09 L394.51,327.82 L392.79,327.54 L391.09,327.24 L389.39,326.92 L387.71,326.58 L386.03,326.22 L384.37,325.85 L382.71,325.46 L381.07,325.05 L379.44,324.62 L377.83,324.18 L376.22,323.71 L374.63,323.23 L373.06,322.74 L371.49,322.23 L369.94,321.70 L368.41,321.15 L366.89,320.59 L365.39,320.01 L363.90,319.41 L362.43,318.80 L360.97,318.17 L359.54,317.53 L358.11,316.87 L356.71,316.19 L355.33,315.50 L353.96,314.80 L352.61,314.08 L351.28,313.34 L349.97,312.59 L348.68,311.83 L347.41,311.05 L346.16,310.25 L344.93,309.45 L343.72,308.62 L342.53,307.79 L341.36,306.94 L340.22,306.08 L339.09,305.21 L337.99,304.32 L336.91,303.42 L335.85,302.51 L334.82,301.59 L333.81,300.65 L332.82,299.70 L331.86,298.74 L330.92,297.77 L330.00,296.79 L329.11,295.80 L328.25,294.80 L327.41,293.79 L326.59,292.77 L325.80,291.73 L325.03,290.69 L324.29,289.64 L323.57,288.58 L322.89,287.51 L322.22,286.44 L321.59,285.35 L320.98,284.26 L320.39,283.16 L319.83,282.05 L319.30,280.93 L318.80,279.81 L318.32,278.68 L317.87,277.55 L317.45,276.41 L317.06,275.26 L316.69,274.11 L316.35,272.95 L316.04,271.79 L315.75,270.62 L315.50,269.45 L315.27,268.27 L315.07,267.09 L314.89,265.91 L314.75,264.72 Z" fill="url(#gBand)"/><path d="M470.90,322.60 L469.19,323.10 L467.48,323.59 L465.75,324.05 L464.02,324.50 L462.28,324.93 L460.53,325.35 L458.78,325.74 L457.02,326.12 L455.25,326.48 L453.47,326.83 L451.70,327.15 L449.91,327.46 L448.12,327.75 L446.33,328.02 L444.53,328.27 L442.73,328.51 L440.93,328.72 L439.13,328.92 L437.32,329.10 L435.51,329.26 L433.70,329.40 L431.89,329.53 L430.08,329.63 L428.27,329.72 L426.46,329.79 L424.65,329.84 L422.85,329.87 L421.04,329.88 L419.24,329.87 L417.44,329.85 L415.65,329.80 L413.85,329.74 L412.07,329.66 L410.28,329.56 L408.50,329.44 L406.73,329.30 L404.96,329.15 L403.20,328.97 L401.45,328.78 L399.70,328.57 L397.96,328.34 L396.23,328.09 L394.51,327.82 L392.79,327.54 L391.09,327.24 L389.39,326.92 L387.71,326.58 L386.03,326.22 L384.37,325.85 L382.71,325.46 L381.07,325.05 L379.44,324.62 L377.83,324.18 L376.22,323.71 L374.63,323.23 L373.06,322.74 L371.49,322.23 L369.94,321.70 L368.41,321.15 L366.89,320.59 L365.39,320.01 L363.90,319.41 L362.43,318.80 L360.97,318.17 L359.54,317.53 L358.11,316.87 L356.71,316.19 L355.33,315.50 L353.96,314.80 L352.61,314.08 L351.28,313.34 L349.97,312.59 L348.68,311.83 L347.41,311.05 L346.16,310.25 L344.93,309.45 L343.72,308.62 L342.53,307.79 L341.36,306.94 L340.22,306.08 L339.09,305.21 L337.99,304.32 L336.91,303.42 L335.85,302.51 L334.82,301.59 L333.81,300.65 L332.82,299.70 L331.86,298.74 L330.92,297.77 L330.00,296.79 L329.11,295.80 L328.25,294.80 L327.41,293.79 L326.59,292.77 L325.80,291.73 L325.03,290.69 L324.29,289.64 L323.57,288.58 L322.89,287.51 L322.22,286.44 L321.59,285.35 L320.98,284.26 L320.39,283.16 L319.83,282.05 L319.30,280.93 L318.80,279.81 L318.32,278.68 L317.87,277.55 L317.45,276.41 L317.06,275.26 L316.69,274.11 L316.35,272.95 L316.04,271.79 L315.75,270.62 L315.50,269.45 L315.27,268.27 L315.07,267.09 L314.89,265.91 L314.75,264.72" fill="none" stroke="#000" stroke-width="1.25"/><path d="M429.11,233.98 L538.70,201.00 L540.70,219.30 L431.11,252.28 Z" fill="#9b9b9b" stroke="#000" stroke-width="1.3" stroke-linejoin="round"/><path d="M468.90,304.30 L470.90,322.60" stroke="#000" stroke-width="1.3"/><path d="M312.75,246.42 L314.75,264.72" stroke="#000" stroke-width="1"/><path d="M429.11,233.98 L538.70,201.00 L538.70,201.00 L537.46,198.94 L536.13,196.90 L534.71,194.90 L533.19,192.93 L531.59,191.00 L529.89,189.10 L528.10,187.25 L526.23,185.43 L524.27,183.66 L522.23,181.93 L520.11,180.25 L517.91,178.62 L515.63,177.03 L513.27,175.49 L510.84,174.01 L508.34,172.58 L505.76,171.20 L503.13,169.87 L500.42,168.61 L497.66,167.40 L494.83,166.25 L491.95,165.15 L489.01,164.12 L486.01,163.15 L482.97,162.24 L479.88,161.40 L476.75,160.62 L473.57,159.90 L470.36,159.25 L467.11,158.66 L463.83,158.14 L460.51,157.69 L457.17,157.30 L453.80,156.98 L450.41,156.73 L447.01,156.55 L443.58,156.43 L440.15,156.38 L436.70,156.40 L433.25,156.49 L429.80,156.64 L426.34,156.87 L422.89,157.16 L419.44,157.52 L416.00,157.94 L412.57,158.44 L409.16,159.00 L405.76,159.62 L402.39,160.31 L399.04,161.06 L395.71,161.88 L392.41,162.76 L389.15,163.71 L385.92,164.71 L382.73,165.78 L379.58,166.91 L376.47,168.09 L373.41,169.34 L370.40,170.64 L367.44,171.99 L364.53,173.40 L361.68,174.86 L358.89,176.38 L356.16,177.94 L353.50,179.56 L350.90,181.22 L348.37,182.93 L345.91,184.68 L343.53,186.48 L341.21,188.32 L338.98,190.20 L336.83,192.11 L334.75,194.07 L332.76,196.06 L330.86,198.08 L329.03,200.13 L327.30,202.21 L325.66,204.33 L324.11,206.46 L322.65,208.62 L321.28,210.81 L320.01,213.01 L318.83,215.23 L317.75,217.47 L316.77,219.72 L315.89,221.99 L315.10,224.27 L314.42,226.55 L313.84,228.84 L313.35,231.14 L312.97,233.43 L312.69,235.73 L312.52,238.03 L312.44,240.32 L312.47,242.61 L312.60,244.89 L312.84,247.16 L313.17,249.42 L313.61,251.67 L314.14,253.90 L314.78,256.11 L315.52,258.30 L316.36,260.48 L317.30,262.62 L318.33,264.75 L319.47,266.84 L320.70,268.91 L322.02,270.95 L323.44,272.95 L324.95,274.92 L326.55,276.86 L328.24,278.75 L330.03,280.61 L331.89,282.43 L333.85,284.20 L335.88,285.93 L338.00,287.62 L340.20,289.25 L342.48,290.84 L344.83,292.38 L347.26,293.87 L349.75,295.31 L352.32,296.69 L354.96,298.01 L357.66,299.28 L360.42,300.50 L363.24,301.65 L366.12,302.75 L369.06,303.78 L372.05,304.75 L375.09,305.67 L378.18,306.51 L381.31,307.30 L384.48,308.02 L387.69,308.68 L390.94,309.27 L394.22,309.79 L397.54,310.25 L400.88,310.64 L404.24,310.96 L407.63,311.22 L411.03,311.40 L414.46,311.52 L417.89,311.58 L421.34,311.56 L424.79,311.48 L428.24,311.32 L431.70,311.10 L435.15,310.82 L438.60,310.46 L442.04,310.04 L445.47,309.55 L448.88,308.99 L452.28,308.37 L455.66,307.69 L459.01,306.94 L462.34,306.12 L465.64,305.24 L468.90,304.30 Z" fill="#a9a9a9" stroke="#000" stroke-width="1.25" stroke-linejoin="round"/><path d="M441,195.5 V204.5 A7,4 0 0 0 455,204.5 V195.5 Z" fill="url(#gCylS)" stroke="#333" stroke-width="1"/><ellipse cx="448" cy="195.5" rx="7" ry="4.3" fill="#b0b0b0" stroke="#222" stroke-width="1.1"/><path d="M429.30,234.00 L416.50,125.00" stroke="#20208c" stroke-width="1.5"/><path d="M412.20,133.00 L416.00,112.50 L420.80,132.00 Q416.50,135.00 412.20,133.00 Z" fill="#1e1e8a"/><path d="M490.40,163.70 L499.00,151.00" stroke="#2a8a2a" stroke-width="1.6"/><path d="M493.00,151.00 L508.50,134.50 L501.50,156.00 Q496.00,155.00 493.00,151.00 Z" fill="#1f7a1f"/><path d="M440.80,254.00 L581.00,289.00" stroke="#a81c1c" stroke-width="1.5"/><path d="M577.00,283.50 L599.00,293.00 L575.50,293.50 Q578.00,288.00 577.00,283.50 Z" fill="#a01818"/><path d="M836.00,445.60 L834.30,431.30" stroke="#1a1a9a" stroke-width="2.2"/><path d="M836.00,445.00 L841.30,438.80" stroke="#1a8a1a" stroke-width="2"/><path d="M836.00,445.60 L851.10,450.10" stroke="#9a1a1a" stroke-width="2.2"/><text x="836.5" y="432" font-family="Liberation Sans" font-size="9.5" fill="#000">Z</text><text x="843.5" y="438" font-family="Liberation Sans" font-size="9" fill="#000">Y</text><text x="854.5" y="450" font-family="Liberation Sans" font-size="9" fill="#000">x</text></svg>
<div style="left:634px;top:160px;width:7px;height:4px;background:repeating-linear-gradient(90deg,#c3c0bb 0 1px,transparent 1px 3px)"></div>

<!-- doc tabs -->
<div style="left:409px;top:634px;width:859px;height:33px;background:#f2f1f0"></div>
<div style="left:409px;top:634px;width:111px;height:29px;border:1px solid #c9c5bf;border-top:none;border-radius:0 0 4px 4px;background:linear-gradient(#d7d5d1,#e7e5e2 35%,#eeedeb)"></div>
<div class="t lbl" style="left:417px;top:642px;font-size:15px">Start page</div>
<svg style="left:494px;top:643px" width="14" height="14"><path d="M2.5,2.5l9,9M11.5,2.5l-9,9" stroke="#a5a5a5" stroke-width="4" stroke-linecap="round"/><path d="M2.5,2.5l9,9M11.5,2.5l-9,9" stroke="#5c5c5c" stroke-width="2.6"/></svg>
<div style="left:519px;top:634px;width:156px;height:33px;border:1px solid #c2beb8;border-top:none;border-radius:0 0 4px 4px;background:#f7f7f6"></div>
<svg style="left:525px;top:642px" width="18" height="16"><path d="M1.7,1.2H9.5V4.3H4.7V6H6.7V8H4.7V13.6H1.7Z" fill="#f03a10"/><circle cx="10.5" cy="8.9" r="4.9" fill="none" stroke="#1636a0" stroke-width="2.2" stroke-dasharray="1.92,1.92"/><circle cx="10.5" cy="8.9" r="3.9" fill="#2a55c0"/><circle cx="10.5" cy="8.9" r="1.7" fill="#fff"/></svg>
<div class="t lbl" style="left:549.5px;top:644px;font-size:14.9px">Unnamed : 1*</div>
<svg style="left:650px;top:643px" width="14" height="14"><path d="M2.5,2.5l9,9M11.5,2.5l-9,9" stroke="#a5a5a5" stroke-width="4" stroke-linecap="round"/><path d="M2.5,2.5l9,9M11.5,2.5l-9,9" stroke="#5c5c5c" stroke-width="2.6"/></svg>

<!-- status -->
<div style="left:1268px;top:35px;width:1px;height:662px;background:linear-gradient(#3c3b37 0,#3c3b37 90px,#b0ada8 130px)"></div>
<div style="left:6px;top:668px;width:1262px;height:1px;background:#fbfbfa"></div>
<div style="left:6px;top:667px;width:1262px;height:1px;background:#d6d3ce"></div>
<div class="t lbl" style="left:1111px;top:676px;font-size:14.6px">184.03 x 100.48 mm</div>
<svg style="left:1255px;top:684px" width="12" height="12"><path d="M10,2v1M7,5v1M10,5v1M4,8v1M7,8v1M10,8v1" stroke="#cfccc7" stroke-width="1.5"/></svg>
</body></html>
